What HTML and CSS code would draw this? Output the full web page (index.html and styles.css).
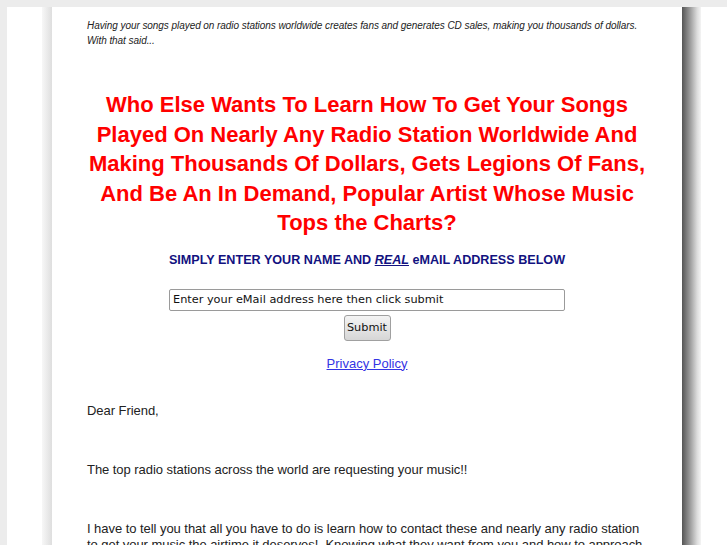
FILE: index.html
```html
<!DOCTYPE html>
<html lang="en">
<head>
<meta charset="utf-8">
<title>Get Your Songs Played On Radio</title>
<link rel="stylesheet" href="styles.css">
</head>
<body>
<div class="frame">
  <div class="shade-l"></div>
  <div class="page">
    <p class="intro">Having your songs played on radio stations worldwide creates fans and generates CD sales, making you thousands of dollars. With that said...</p>
    <h1 class="headline">Who Else Wants To Learn How To Get Your Songs<br>Played On Nearly Any Radio Station Worldwide And<br>Making Thousands Of Dollars, Gets Legions Of Fans,<br>And Be An In Demand, Popular Artist Whose Music<br>Tops the Charts?</h1>
    <p class="cta">SIMPLY ENTER YOUR NAME AND <em class="real">REAL</em> eMAIL ADDRESS BELOW</p>
    <form class="optin">
      <input class="email" type="text" value="Enter your eMail address here then click submit">
      <button class="submit" type="button">Submit</button>
    </form>
    <p class="privacy"><a href="#">Privacy Policy</a></p>
    <p class="copy">Dear Friend,</p>
    <p class="copy">The top radio stations across the world are requesting your music!!</p>
    <p class="copy">I have to tell you that all you have to do is learn how to contact these and nearly any radio station to get your music the airtime it deserves!&nbsp; Knowing what they want from you and how to approach them is the key to being heard.</p>
  </div>
  <div class="shade-r"></div>
</div>
</body>
</html>
```
FILE: styles.css
```css
html, body {
  margin: 0;
  padding: 0;
  background: #ececec;
  overflow: hidden;
}
body {
  padding: 7px 0 0 7px;
  font-family: "Liberation Sans", Arial, sans-serif;
}
.frame {
  display: flex;
  align-items: stretch;
  background: #ffffff;
  padding-left: 35px;
  min-height: 600px;
}
.shade-l {
  width: 10px;
  flex: none;
  background: linear-gradient(to right, #f7f7f7, #dedede);
}
.shade-r {
  width: 19px;
  flex: none;
  background: linear-gradient(to right, #555555, #8f8f8f 35%, #dddddd 80%, #f4f4f4);
}
.page {
  width: 560px;
  flex: none;
  background: #ffffff;
  padding: 11px 35px 0 35px;
}
.intro {
  margin: 0;
  font-size: 10px;
  line-height: 15px;
  font-style: italic;
  color: #222;
  letter-spacing: -0.06px;
}
.headline {
  margin: 42px 0 0 0;
  text-align: center;
  color: #ff0000;
  font-size: 22px;
  line-height: 29.5px;
  font-weight: bold;
}
.cta {
  margin: 14px 0 0 0;
  text-align: center;
  color: #121280;
  font-size: 12.6px;
  font-weight: bold;
  line-height: 16px;
}
.real {
  text-decoration: underline;
}
.optin {
  display: flex;
  flex-direction: column;
  align-items: center;
  gap: 4px;
  margin-top: 21px;
}
.email {
  box-sizing: border-box;
  width: 396px;
  height: 22px;
  margin: 0;
  padding: 0 3px;
  border: 1px solid #9a9a9a;
  border-radius: 2px;
  font-family: "DejaVu Sans", sans-serif;
  font-size: 11.3px;
  color: #111;
  background: #fff;
}
.submit {
  box-sizing: border-box;
  width: 47px;
  height: 26px;
  margin: 0;
  padding: 0;
  border: 1px solid #a0a0a0;
  border-radius: 3px;
  background: linear-gradient(#f4f4f4, #d6d6d6);
  font-family: "DejaVu Sans", sans-serif;
  font-size: 11.3px;
  color: #111;
}
.privacy {
  margin: 15px 0 0 0;
  text-align: center;
  font-size: 13px;
  line-height: 16px;
}
.privacy a {
  color: #3434e4;
}
.copy {
  margin: 31px 0 0 0;
  font-size: 13px;
  line-height: 16px;
  color: #222;
  letter-spacing: -0.05px;
}
.copy + .copy {
  margin-top: 43px;
}
```
